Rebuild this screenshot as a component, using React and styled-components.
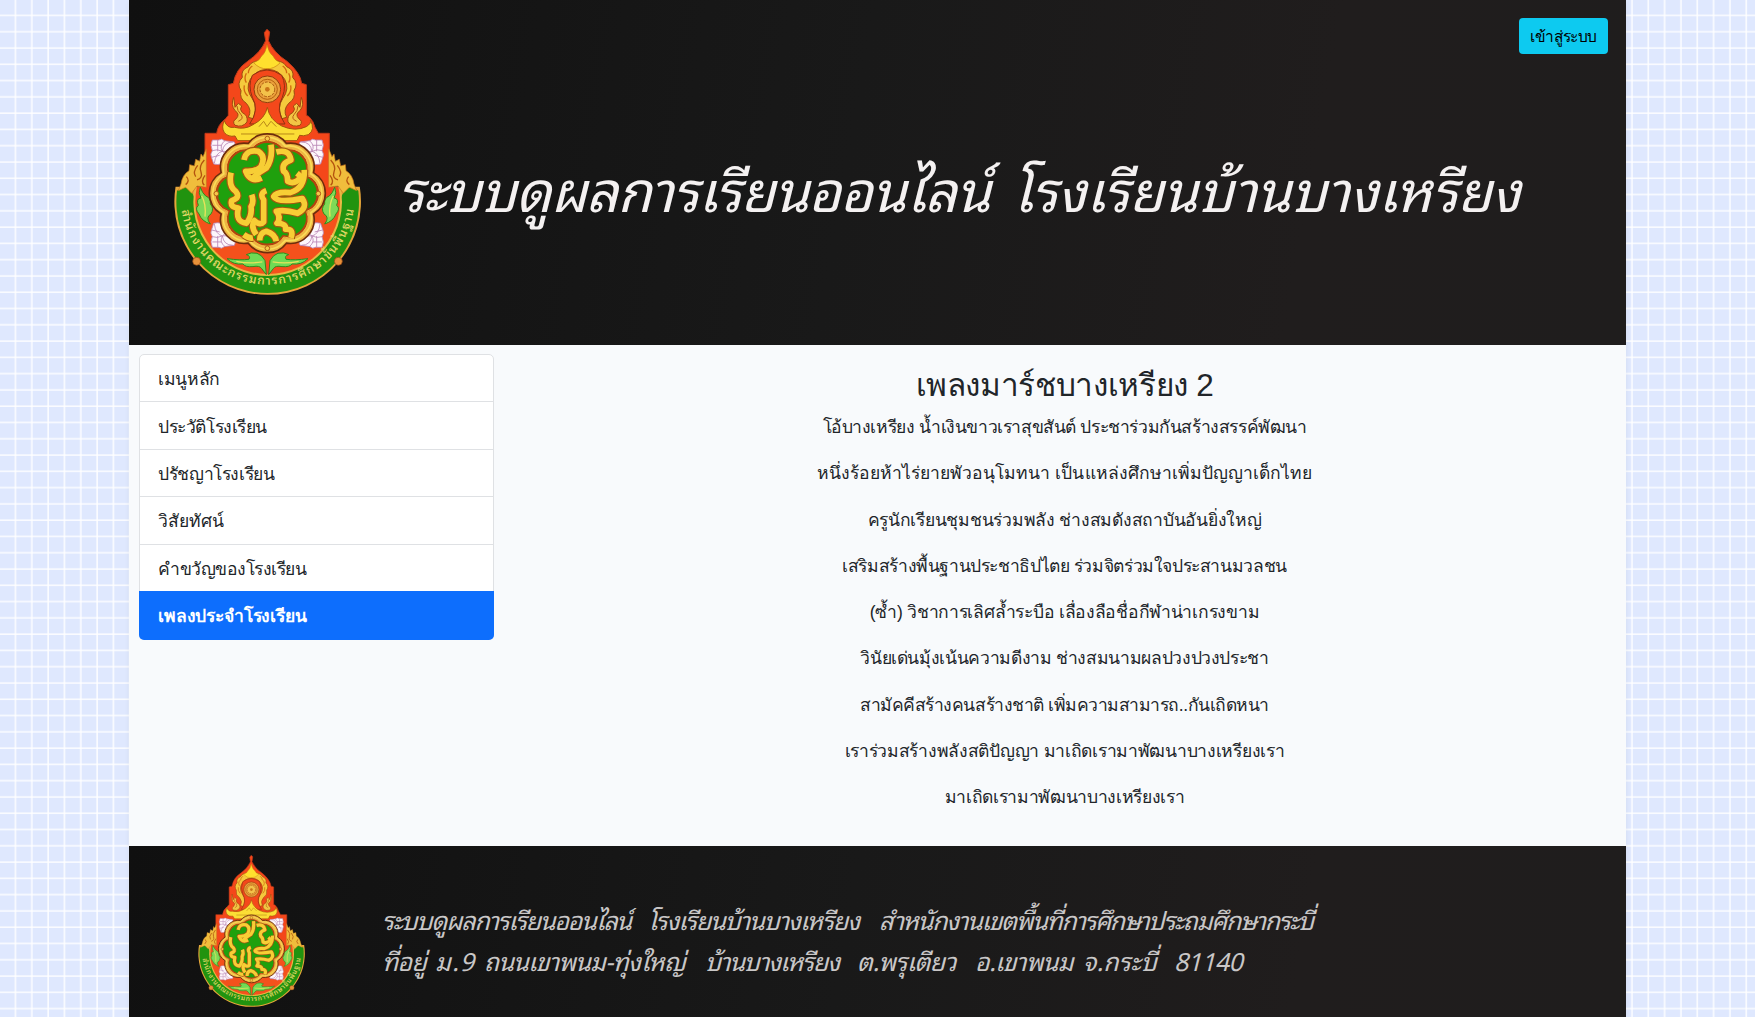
import React, { useLayoutEffect, useRef, useState } from "react";
import styled, { createGlobalStyle, css } from "styled-components";

const THAI = '"Liberation Sans", "Noto Sans", sans-serif';
const SCRIPT = '"Noto Sans Thai Looped", "Noto Sans", cursive';

const GlobalStyle = createGlobalStyle`
  * { box-sizing: border-box; }
  html, body { margin: 0; height: 100%; overflow: hidden; }
  body {
    font-family: ${THAI};
    font-size: 17.5px;
    color: #212529;
    background-color: #dfe8fe;
    background-image:
      linear-gradient(to right, transparent 14.4px, rgba(255, 255, 255, 0.85) 15.1px, rgba(255, 255, 255, 0.85) 100%),
      linear-gradient(to bottom, transparent 14.4px, rgba(255, 255, 255, 0.85) 15.1px, rgba(255, 255, 255, 0.85) 100%);
    background-size: 16.33px 16.29px;
  }
`;

const Page = styled.div`
  width: 1497px;
  height: 1017px;
  margin-left: 129px;
  display: flex;
  flex-direction: column;
  background: #f8fafc;
  box-shadow: 0 2px 5px rgba(0, 0, 0, 0.06);
`;

const banner = css`
  display: flex;
  background: linear-gradient(100deg, #101010 0%, #191919 48%, #201d1d 78%, #1f1d1d 100%);
`;

const Header = styled.header`
  ${banner}
  height: 345px;
  padding: 20px 18px 0 36px;
`;

const Emblem = styled.svg`
  display: block;
  flex: none;
  width: ${(p) => p.$w}px;
  height: ${(p) => p.$w * 1.39}px;
`;

const ScriptRow = styled.div`
  display: flex;
  align-items: baseline;
  gap: ${(p) => p.$gap || 0}px;
  height: ${(p) => p.$h}px;
  line-height: ${(p) => p.$h}px;
  font-family: ${SCRIPT};
  font-size: ${(p) => p.$size}px;
  font-weight: 400;
  font-style: italic;
  color: ${(p) => p.$color};
`;

const HeaderTitle = styled.h1`
  margin: 117px 0 0 28px;
  flex: 1;
  font-size: inherit;
`;

const LoginButton = styled.button`
  width: 89px;
  height: 36px;
  margin: -2px 0 0 -100px;
  padding: 1px 0 0;
  border: 0;
  border-radius: 4px;
  background: #0dcaf0;
  color: #000;
  font: 15.5px/35px ${THAI};
`;

const Main = styled.main`
  display: flex;
  height: 501px;
  padding: 9px 0 0 10px;
`;

const Nav = styled.nav`
  width: 355px;
  height: 286px;
  display: flex;
  flex-direction: column;
  border: 1px solid #dfe1e4;
  border-radius: 5px;
  background: #fff;
`;

const NavItem = styled.a`
  flex: 0 0 47.4px;
  display: flex;
  align-items: center;
  padding: 2px 0 0 18px;
  border-bottom: 1px solid #dfe1e4;
  ${(p) =>
    p.$active &&
    css`
      flex: 1;
      margin: -1px;
      padding-left: 19px;
      border: 0;
      border-radius: 0 0 5px 5px;
      background: #0d6efd;
      color: #fff;
      font-weight: 700;
    `}
`;

const Song = styled.section`
  flex: 1;
  margin-left: 9px;
  padding-top: 9px;
  display: flex;
  flex-direction: column;
  align-items: center;
`;

const SongTitle = styled.h2`
  margin: 0;
  font-size: 31.5px;
  font-weight: 400;
  line-height: 44px;
`;

const Verse = styled.p`
  margin: 0;
  height: 46.3px;
  line-height: 41px;
`;

const Footer = styled.footer`
  ${banner}
  height: 171px;
  padding: 4px 0 0 64px;
`;

const Address = styled.div`
  margin: 49px 0 0 72px;
`;

const Spaced = styled.span`
  display: inline-block;
  white-space: pre;
`;

// Tracks a piece of text so that it fills exactly the given width.
function Fit({ width, children }) {
  const ref = useRef(null);
  const [track, setTrack] = useState(0);
  useLayoutEffect(() => {
    const el = ref.current;
    el.style.letterSpacing = "0px";
    const base = el.getBoundingClientRect().width;
    el.style.letterSpacing = "1px";
    const step = el.getBoundingClientRect().width - base;
    const next = step > 0 ? (width - base) / step : 0;
    el.style.letterSpacing = `${next}px`;
    setTrack(next);
  }, [width]);
  return (
    <Spaced ref={ref} style={{ letterSpacing: track }}>
      {children}
    </Spaced>
  );
}

// Eight-lobed outline of the central medallion.
function lobes(cx, cy, rx, ry, bulge) {
  const pts = [];
  for (let i = 0; i < 8; i++) {
    const a = ((i + 0.5) * Math.PI) / 4;
    pts.push([cx + rx * Math.cos(a), cy + ry * Math.sin(a)]);
  }
  let d = `M${pts[7][0]},${pts[7][1]}`;
  pts.forEach(([x, y]) => {
    d += ` A${bulge},${bulge} 0 0 1 ${x},${y}`;
  });
  return d + "Z";
}

const Lotus = ({ x, y, sx = 1, sy = 1 }) => (
  <g transform={`translate(${x} ${y}) scale(${sx} ${sy})`} fill="#fdf6fb" stroke="#b884b4" strokeWidth="2.5">
    <path d="M-34,-34 H-14 Q-6,-40 2,-32 L32,-28 Q40,-14 26,6 L4,28 Q-6,44 -30,38 L-36,20 Q-42,8 -34,-2 Q-42,-18 -34,-34Z" />
    <path d="M28,-28 Q0,-28 -4,0 Q-24,4 -28,36 M4,-32 Q-14,-18 -4,0 Q10,8 4,26 M-34,-2 Q-20,-8 -4,0 Q18,0 26,4 M-34,-18 H-6 M-18,-34 V0 M-36,18 L-12,12" fill="none" />
    <circle cx="22" cy="20" r="10" fill="#f8a23c" stroke="#b5541a" />
  </g>
);

const half = (
  <>
    {/* flame ornament along the spire */}
    <path d="M300,122 Q262,118 250,140 Q226,150 232,172 Q214,190 228,212 Q222,236 244,250 Q262,270 250,292 L264,296 Q280,262 262,236 Q240,206 256,178 Q272,150 306,148Z" fill="#f5c93c" stroke="#9a4a10" strokeWidth="3" />
    <path d="M244,160 Q236,176 244,188 M238,196 Q234,214 248,228 M262,138 Q250,146 250,160" fill="none" stroke="#d1690f" strokeWidth="4" />
    <path d="M206,232 Q196,254 210,272 Q226,282 214,296 Q200,304 210,316 Q232,324 246,306 Q250,286 232,278 Q222,268 230,258 L220,250 L210,262Z" fill="#f2c544" stroke="#a0480e" strokeWidth="3" />
    <path d="M216,258 Q216,272 228,284 Q238,296 220,304" fill="none" stroke="#b55a12" strokeWidth="3" />
    {/* side wing */}
    <path d="M124,386 L114,410 L108,402 L104,424 L92,418 L88,438 L74,434 L72,452 Q52,464 48,492 L40,512 L62,502 L80,520 L96,498 L124,502Z" fill="#f0bd3c" stroke="#c8741c" strokeWidth="2" />
    <path d="M118,420 Q100,440 108,456 Q114,474 96,480 M98,436 Q82,456 92,470 M64,470 Q76,482 62,494 M120,466 Q106,484 118,496" fill="none" stroke="#b4530f" strokeWidth="4" />
    {/* leaves */}
    <path d="M106,502 Q98,520 108,534 Q92,536 100,556 Q88,566 102,582 Q110,604 136,612 Q120,592 138,582 Q148,566 136,552 Q138,534 122,528 Q112,520 106,502Z" fill="#7ed957" stroke="#2d8f1a" strokeWidth="3" />
    <path d="M110,528 Q124,552 120,590" fill="none" stroke="#e9e25a" strokeWidth="4" />
    <path d="M300,722 Q290,704 276,700 Q258,696 244,704 Q258,708 252,718 Q226,722 186,716 Q206,736 234,732 Q240,742 264,740 Q284,736 290,746 L304,764Z" fill="#6fdb55" stroke="#2f8b1c" strokeWidth="3" />
    <path d="M214,724 Q250,732 292,726" fill="none" stroke="#e6e25c" strokeWidth="4" />
    <circle cx="95" cy="724" r="12" fill="#e8913a" stroke="#8a4210" strokeWidth="2" />
  </>
);

const monogram = [
  "M237,420 Q244,386 280,394 Q304,410 288,440 Q272,456 242,454 Q256,490 290,474",
  "M318,374 Q324,418 304,444 Q282,456 264,474",
  "M334,396 Q372,386 378,420 Q348,430 356,454 Q368,460 368,484 Q390,496 408,470 L396,460",
  "M198,458 Q190,500 212,514 Q228,534 200,542 Q194,562 220,564 Q210,606 244,610 Q262,588 258,560 Q268,546 260,524",
  "M304,512 Q282,520 296,540 V606 Q286,618 268,602 Q256,620 274,644",
  "M418,450 Q420,506 376,518 Q334,514 326,530 Q338,550 412,536 Q430,564 398,580 Q360,568 334,574 Q350,592 336,610 Q364,610 362,628 Q388,626 378,654",
  "M284,662 Q284,638 304,634 Q330,642 334,664 M236,644 Q252,656 264,654",
];

function Seal({ width, id }) {
  return (
    <Emblem $w={width} viewBox="0 0 615 855">
      <defs>
        <path id={id} d="M 48,556 A 261 261 0 0 0 568,556" />
      </defs>
      {/* crescent with the green name band */}
      <path d="M31.6,500 A280,280 0 1 0 584.4,500 L530,500 H86Z" fill="#e6a63a" />
      <path d="M36,512 Q58,496 76,508 L92,540 H524 L540,508 Q558,496 580,512 A274,274 0 1 1 36,512Z" fill="#21930f" />
      <path d="M89.6,500 A223,223 0 1 0 526.4,500Z" fill="#e9b843" />
      <path d="M95.7,500 A217,217 0 1 0 520.3,500Z" fill="#f4511c" />
      {/* spire */}
      <path
        d="M306,28 L314,36 L310,62 Q326,98 366,124 Q406,158 410,190 L424,194 V286 L432,290 Q446,304 450,322 L460,340 H493 V400 L506,560 H110 L120,400 V340 H155 Q158,314 182,296 L190,286 V194 L205,190 Q212,148 248,124 Q288,96 302,62 L298,38Z"
        fill="#f4471a"
      />
      <path
        d="M120,400 V340 H155 Q158,314 182,296 L190,286 V194 L205,190 Q212,148 248,124 Q288,96 302,62 L298,38 L306,28 L314,36 L310,62 Q326,98 366,124 Q406,158 410,190 L424,194 V286 L432,290 Q446,304 450,322 L460,340 H493 V400"
        fill="none"
        stroke="#c2391a"
        strokeWidth="3"
      />
      {half}
      <g transform="translate(615 0) scale(-1 1)">{half}</g>
      <path d="M306,74 Q312,100 324,108 Q330,122 346,128 Q326,148 306,146 Q284,148 266,128 Q284,122 290,108 Q302,98 306,74Z" fill="#ffe02e" stroke="#c9810f" strokeWidth="2" />
      <path d="M262,166 Q306,134 350,166 Q366,196 352,232 Q330,270 360,312 H254 Q284,270 262,232 Q248,196 262,166Z" fill="#f4481b" stroke="#8c3410" strokeWidth="3" />
      <circle cx="307" cy="208" r="40" fill="#eaa03c" stroke="#8f3d0d" strokeWidth="3" />
      <circle cx="307" cy="208" r="30" fill="none" stroke="#b4600f" strokeWidth="3" />
      <circle cx="307" cy="208" r="22" fill="#f3c24a" stroke="#a7560f" strokeWidth="3" strokeDasharray="8 4" />
      <circle cx="307" cy="208" r="7" fill="#c97316" />
      <path d="M307,262 Q314,300 350,318 Q390,336 424,320 Q440,310 436,300 Q452,330 430,344 Q414,350 404,346 L396,362 H218 L210,348 Q190,352 178,338 Q168,322 178,302 Q186,326 208,322 Q240,330 264,314 Q300,296 307,262Z" fill="#fbdd35" stroke="#a4520d" strokeWidth="3" />
      <path d="M282,320 L296,304 L306,320 L318,304 L334,320 M228,342 H388" fill="none" stroke="#b88718" strokeWidth="3" />
      <Lotus x={176} y={394} />
      <Lotus x={437} y={394} sx={-1} />
      <Lotus x={176} y={648} sy={-1} />
      <Lotus x={437} y={648} sx={-1} sy={-1} />
      {/* medallion */}
      <path d={lobes(307, 520, 150, 162, 72)} fill="#eeb443" stroke="#6e2d0c" strokeWidth="5" />
      <path d={lobes(307, 520, 141, 153, 68)} fill="none" stroke="#f9dc58" strokeWidth="5" />
      <path d={lobes(307, 520, 125, 139, 57)} fill="#1fa00d" stroke="#b2430f" strokeWidth="7" />
      <path d={lobes(307, 520, 128, 142, 57)} fill="none" stroke="#f1bb45" strokeWidth="3" />
      {[[307, 356], [307, 685], [154, 521], [460, 521]].map(([x, y]) => (
        <circle key={`${x}-${y}`} cx={x} cy={y} r="7" fill="#f6c84a" stroke="#b05c15" strokeWidth="3" />
      ))}
      <g fill="none" strokeLinejoin="round">
        {monogram.map((d) => (
          <path key={d} d={d} stroke="#a2560f" strokeWidth="24" />
        ))}
        {monogram.map((d) => (
          <path key={d} d={d} stroke="#f7ce35" strokeWidth="17" />
        ))}
      </g>
      <text fontFamily={SCRIPT} fontSize="36" fontWeight="500" fill="#e5d968">
        <textPath href={`#${id}`} startOffset="16" textLength="745">
          สำนักงานคณะกรรมการการศึกษาขั้นพื้นฐาน
        </textPath>
      </text>
    </Emblem>
  );
}

const menu = [
  ["เมนูหลัก", 62],
  ["ประวัติโรงเรียน", 109],
  ["ปรัชญาโรงเรียน", 116.5],
  ["วิสัยทัศน์", 66],
  ["คำขวัญของโรงเรียน", 148.5],
  ["เพลงประจำโรงเรียน", 148.5],
];

const verses = [
  ["โอ้บางเหรียง น้ำเงินขาวเราสุขสันต์ ประชาร่วมกันสร้างสรรค์พัฒนา", 484],
  ["หนึ่งร้อยห้าไร่ยายพัวอนุโมทนา เป็นแหล่งศึกษาเพิ่มปัญญาเด็กไทย", 496],
  ["ครูนักเรียนชุมชนร่วมพลัง ช่างสมดังสถาบันอันยิ่งใหญ่", 394],
  ["เสริมสร้างพื้นฐานประชาธิปไตย ร่วมจิตร่วมใจประสานมวลชน", 444.5],
  ["(ซ้ำ) วิชาการเลิศล้ำระบือ เลื่องลือชื่อกีฬาน่าเกรงขาม", 389.5],
  ["วินัยเด่นมุ้งเน้นความดีงาม ช่างสมนามผลปวงปวงประชา", 408.5],
  ["สามัคคีสร้างคนสร้างชาติ เพิ่มความสามารถ..กันเถิดหนา", 408.5],
  ["เราร่วมสร้างพลังสติปัญญา มาเถิดเรามาพัฒนาบางเหรียงเรา", 440],
  ["มาเถิดเรามาพัฒนาบางเหรียงเรา", 239.5],
];

const Gap = styled.span`
  display: inline-block;
  width: ${(p) => p.$w}px;
`;

const addressLine = [
  ["ที่อยู่", 44, 9],
  ["ม.9", 40, 9],
  ["ถนนเขาพนม-ทุ่งใหญ่", 201, 20],
  ["บ้านบางเหรียง", 134, 18],
  ["ต.พรุเตียว", 99, 19],
  ["อ.เขาพนม", 98, 10],
  ["จ.กระบี่", 74, 17],
  ["81140", 68, 0],
];

export default function App() {
  return (
    <>
      <GlobalStyle />
      <Page>
        <Header>
          <Seal width={205} id="band-top" />
          <HeaderTitle>
            <ScriptRow $size={56} $h={100} $gap={22} $color="#f4f1f1">
              <Fit width={592}>ระบบดูผลการเรียนออนไลน์</Fit>
              <Fit width={508}>โรงเรียนบ้านบางเหรียง</Fit>
            </ScriptRow>
          </HeaderTitle>
          <LoginButton type="button">
            <Fit width={67}>เข้าสู่ระบบ</Fit>
          </LoginButton>
        </Header>
        <Main>
          <Nav>
            {menu.map(([label, w], i) => (
              <NavItem key={label} $active={i === menu.length - 1}>
                <Fit width={w}>{label}</Fit>
              </NavItem>
            ))}
          </Nav>
          <Song>
            <SongTitle>
              <Fit width={298}>เพลงมาร์ชบางเหรียง 2</Fit>
            </SongTitle>
            {verses.map(([line, w]) => (
              <Verse key={line}>
                <Fit width={w}>{line}</Fit>
              </Verse>
            ))}
          </Song>
        </Main>
        <Footer>
          <Seal width={117} id="band-bottom" />
          <Address>
            <ScriptRow $size={25} $h={41} $color="#c9c7c7">
              <Fit width={249}>ระบบดูผลการเรียนออนไลน์</Fit>
              <Gap $w={17} />
              <Fit width={211}>โรงเรียนบ้านบางเหรียง</Fit>
              <Gap $w={20} />
              <Fit width={434}>สำหนักงานเขตพื้นที่การศึกษาประถมศึกษากระบี่</Fit>
            </ScriptRow>
            <ScriptRow $size={25} $h={41} $color="#c9c7c7">
              {addressLine.map(([word, w, gap]) => (
                <React.Fragment key={word}>
                  <Fit width={w}>{word}</Fit>
                  <Gap $w={gap} />
                </React.Fragment>
              ))}
            </ScriptRow>
          </Address>
        </Footer>
      </Page>
    </>
  );
}
